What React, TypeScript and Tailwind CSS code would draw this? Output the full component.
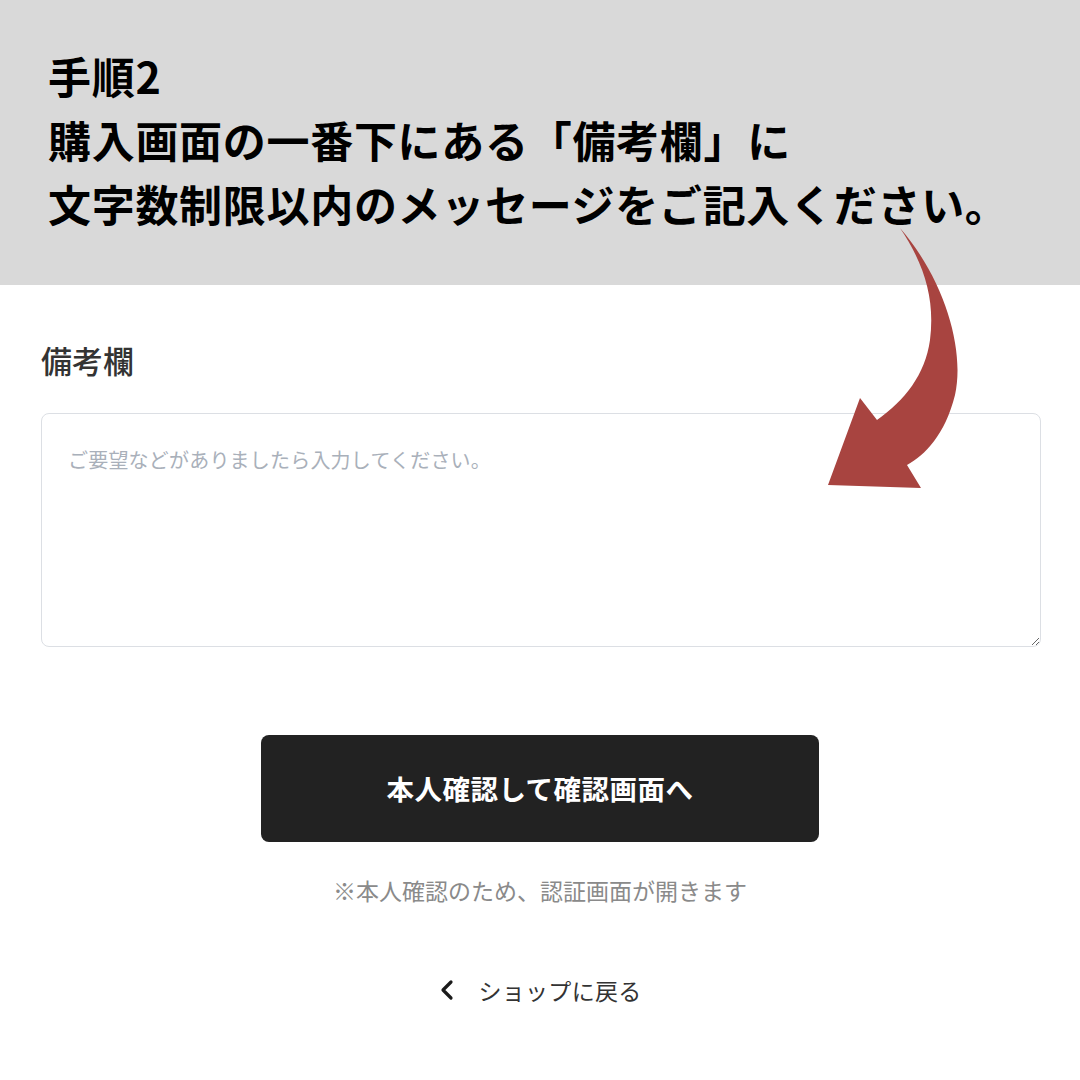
import React from 'react'

const jp = { fontFamily: '"Noto Sans CJK JP", "Noto Sans", sans-serif' }

export default function App() {
    return (
        <div className="relative w-[1080px] h-[1080px] overflow-hidden bg-white" style={jp}>
            {/* Instruction banner */}
            <div className="h-[285px] bg-[#d9d9d9] pl-[48px] pt-[43px]">
                <p className="text-[43px] leading-[64px] font-bold text-black tracking-[0.7px]">手順2</p>
                <p className="text-[43px] leading-[64px] font-bold text-black tracking-[0.7px]">購入画面の一番下にある「備考欄」に</p>
                <p className="text-[43px] leading-[64px] font-bold text-black tracking-[0.7px]">文字数制限以内のメッセージをご記入ください。</p>
            </div>

            {/* Form */}
            <div className="pl-[41px] pt-[54px]">
                <label className="block text-[31px] leading-[42px] font-medium text-[#333333]">備考欄</label>
                <textarea
                    className="mt-[32px] block w-[1000px] h-[234px] rounded-[8px] border border-[#dcdfe4] bg-white pl-[26px] pr-4 pt-[31px] text-[20px] leading-[30px] text-[#333] outline-none placeholder:text-[#a9b0ba] tracking-[0.2px]"
                    placeholder="ご要望などがありましたら入力してください。"
                />
            </div>

            <div className="flex flex-col items-center">
                <button className="mt-[88px] w-[558px] h-[107px] rounded-[8px] bg-[#222222] text-white text-[27.5px] font-bold tracking-[0.5px]">
                    本人確認して確認画面へ
                </button>
                <p className="mt-[32px] text-[23px] leading-[32px] text-[#8a8a8a]">※本人確認のため、認証画面が開きます</p>
                <a className="mt-[68px] flex items-center gap-[22px] text-[23px] leading-[32px] text-[#333333] tracking-[0.3px]">
                    <svg width="18" height="22" viewBox="0 0 18 22" fill="none">
                        <path d="M13 3 L5 11 L13 19" stroke="#1a1a1a" strokeWidth="3.2" strokeLinecap="round" strokeLinejoin="round" />
                    </svg>
                    ショップに戻る
                </a>
            </div>

            {/* Curved pointer arrow */}
            <svg className="absolute inset-0 pointer-events-none" width="1080" height="1080" viewBox="0 0 1080 1080">
                <path
                    d="M900 228 C945 280 965 350 955 395 C945 435 925 455 907 465 L921 488 L828 485 L860 398 L877 420 C905 400 925 375 930 340 C935 300 925 265 900 228 Z"
                    fill="#a84440"
                />
            </svg>
        </div>
    )
}
